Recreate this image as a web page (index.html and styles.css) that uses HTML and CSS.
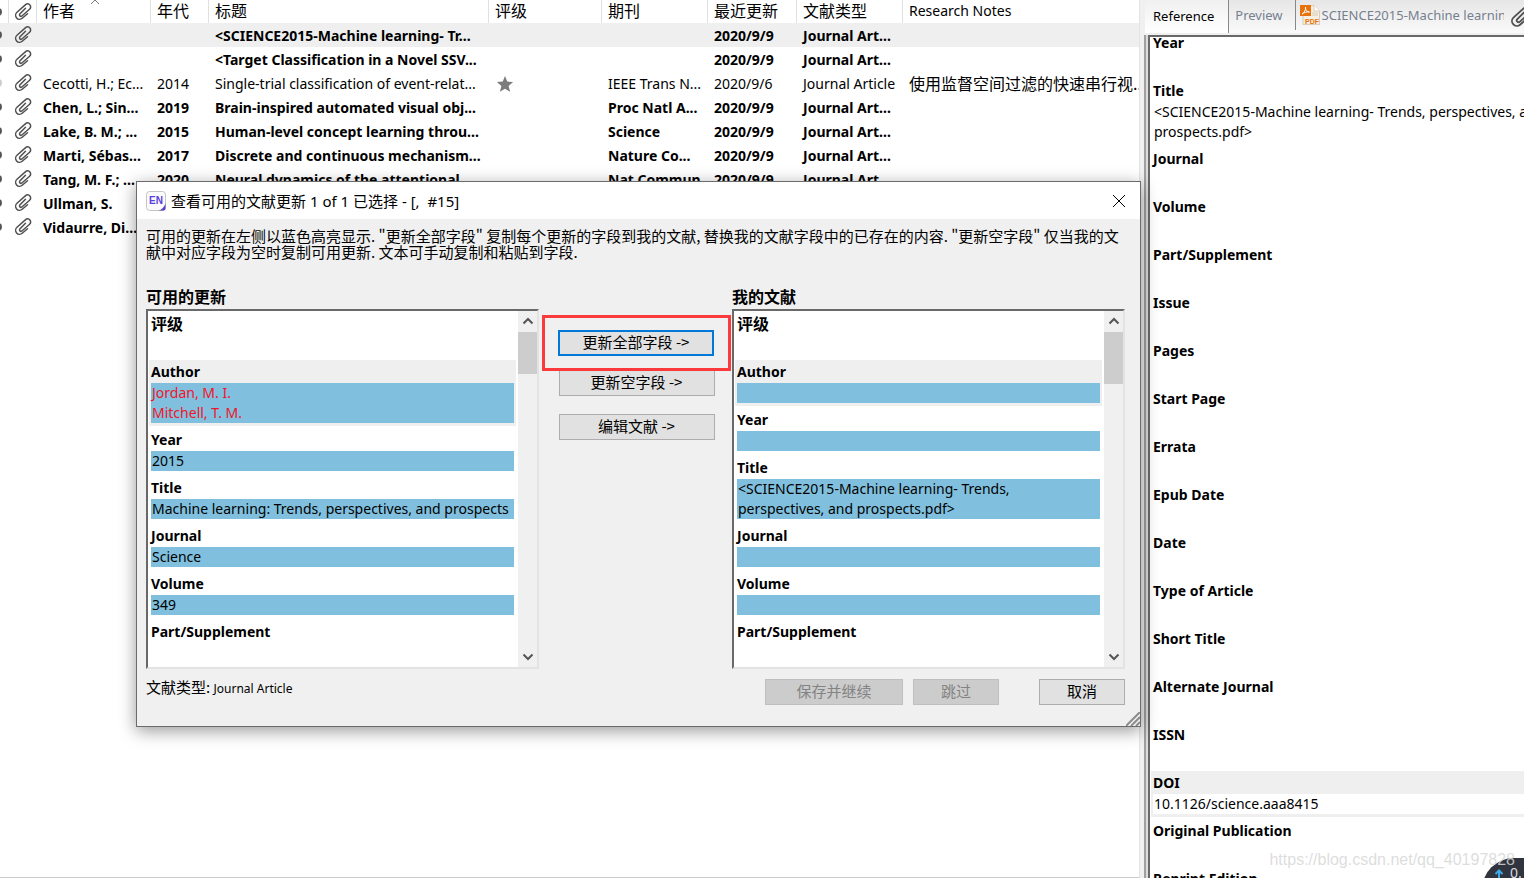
FILE: index.html
```html
<!DOCTYPE html>
<html lang="zh-CN">
<head>
<meta charset="utf-8">
<title>EndNote</title>
<link rel="stylesheet" href="styles.css">
</head>
<body>
<svg class="defs" aria-hidden="true">
  <symbol id="clip" viewBox="0 0 18 18"><path d="M11.500 5.200L5.800 10.900a1.500 1.500 0 0 0 2.100 2.100L15.600 6.200a2.900 2.900 0 0 0-4-4.600L3 9.300a3.900 3.900 0 0 0 5.200 6L13.500 10.800" fill="none" stroke="#505050" stroke-width="1.500" stroke-linecap="round"/></symbol>
  <symbol id="up" viewBox="0 0 12 8"><path d="M1.500 6.500L6 2l4.500 4.500" fill="none" stroke="#555" stroke-width="2"/></symbol>
  <symbol id="down" viewBox="0 0 12 8"><path d="M1.500 1.500L6 6l4.500-4.500" fill="none" stroke="#555" stroke-width="2"/></symbol>
</svg>
<main class="library">
  <table class="refs">
    <colgroup><col class="c-read"><col class="c-clip"><col class="c-author"><col class="c-year"><col class="c-title"><col class="c-rating"><col class="c-journal"><col class="c-updated"><col class="c-type"><col></colgroup>
    <thead>
      <tr><th><i class="dot"></i></th><th><svg class="clip"><use href="#clip"/></svg></th><th class="sorted">作者<svg class="caret" viewBox="0 0 10 4"><path d="M1 4L5 0l4 4" fill="none" stroke="#777"/></svg></th><th>年代</th><th>标题</th><th>评级</th><th>期刊</th><th>最近更新</th><th>文献类型</th><th class="latin">Research Notes</th></tr>
    </thead>
    <tbody>
      <tr class="unread current"><td><i class="dot"></i></td><td><svg class="clip"><use href="#clip"/></svg></td><td></td><td></td><td>&lt;SCIENCE2015-Machine learning- Tr...</td><td></td><td></td><td>2020/9/9</td><td>Journal Art...</td><td></td></tr>
      <tr class="unread"><td><i class="dot"></i></td><td><svg class="clip"><use href="#clip"/></svg></td><td></td><td></td><td>&lt;Target Classification in a Novel SSV...</td><td></td><td></td><td>2020/9/9</td><td>Journal Art...</td><td></td></tr>
      <tr><td><i class="dot read"></i></td><td><svg class="clip"><use href="#clip"/></svg></td><td>Cecotti, H.; Ec...</td><td>2014</td><td>Single-trial classification of event-relat...</td><td><svg class="star" viewBox="0 0 20 20"><path d="M10 1l2.500 6.300 6.500.5-5 4.300 1.700 6.600L10 15.200l-5.700 3.500L6 12.100 1 7.800l6.500-.5z" fill="#7d7d7d"/></svg></td><td>IEEE Trans N...</td><td>2020/9/6</td><td>Journal Article</td><td class="cjk">使用监督空间过滤的快速串行视...</td></tr>
      <tr class="unread"><td><i class="dot"></i></td><td><svg class="clip"><use href="#clip"/></svg></td><td>Chen, L.; Sin...</td><td>2019</td><td>Brain-inspired automated visual obj...</td><td></td><td>Proc Natl A...</td><td>2020/9/9</td><td>Journal Art...</td><td></td></tr>
      <tr class="unread"><td><i class="dot"></i></td><td><svg class="clip"><use href="#clip"/></svg></td><td>Lake, B. M.; ...</td><td>2015</td><td>Human-level concept learning throu...</td><td></td><td>Science</td><td>2020/9/9</td><td>Journal Art...</td><td></td></tr>
      <tr class="unread"><td><i class="dot"></i></td><td><svg class="clip"><use href="#clip"/></svg></td><td>Marti, Sébas...</td><td>2017</td><td>Discrete and continuous mechanism...</td><td></td><td>Nature Co...</td><td>2020/9/9</td><td>Journal Art...</td><td></td></tr>
      <tr class="unread"><td><i class="dot"></i></td><td><svg class="clip"><use href="#clip"/></svg></td><td>Tang, M. F.; ...</td><td>2020</td><td>Neural dynamics of the attentional ...</td><td></td><td>Nat Commun</td><td>2020/9/9</td><td>Journal Art...</td><td></td></tr>
      <tr class="unread"><td><i class="dot"></i></td><td><svg class="clip"><use href="#clip"/></svg></td><td>Ullman, S.</td><td></td><td></td><td></td><td></td><td></td><td></td><td></td></tr>
      <tr class="unread"><td><i class="dot"></i></td><td><svg class="clip"><use href="#clip"/></svg></td><td>Vidaurre, Di...</td><td></td><td></td><td></td><td></td><td></td><td></td><td></td></tr>
    </tbody>
  </table>
</main>
<aside class="detail">
  <nav class="tabs">
    <button class="tab active">Reference</button>
    <button class="tab">Preview</button>
    <button class="tab file"><svg class="pdf" viewBox="0 0 20 20"><path d="M3 .5h11L19.500 6v13.500H3z" fill="#f6efe2" stroke="#d8cdb8"/><path d="M14 .5V6h5.500" fill="#fff" stroke="#d8cdb8"/><path d="M12 8h6M12 10h6" stroke="#d8cdb8"/><rect width="11" height="11" fill="#e8730c"/><path d="M2 9c2-1 4-4 3.500-7C5 5 7 7 9.500 7 7 6.500 4 7.500 2 9z" fill="none" stroke="#fff"/><text x="5" y="19" class="pdf-label">PDF</text></svg><span class="file-name">SCIENCE2015-Machine learning</span></button>
    <button class="attach" aria-label="附件"><svg><use href="#clip"/></svg></button>
  </nav>
  <div class="sheet">
    <div class="field"><b>Year</b><p></p></div>
    <div class="field"><b>Title</b><p>&lt;SCIENCE2015-Machine learning- Trends, perspectives, and<br>prospects.pdf&gt;</p></div>
    <div class="field"><b>Journal</b><p></p></div>
    <div class="field"><b>Volume</b><p></p></div>
    <div class="field"><b>Part/Supplement</b><p></p></div>
    <div class="field"><b>Issue</b><p></p></div>
    <div class="field"><b>Pages</b><p></p></div>
    <div class="field"><b>Start Page</b><p></p></div>
    <div class="field"><b>Errata</b><p></p></div>
    <div class="field"><b>Epub Date</b><p></p></div>
    <div class="field"><b>Date</b><p></p></div>
    <div class="field"><b>Type of Article</b><p></p></div>
    <div class="field"><b>Short Title</b><p></p></div>
    <div class="field"><b>Alternate Journal</b><p></p></div>
    <div class="field"><b>ISSN</b><p></p></div>
    <div class="field focus"><b>DOI</b><p>10.1126/science.aaa8415</p></div>
    <div class="field"><b>Original Publication</b><p></p></div>
    <div class="field"><b>Reprint Edition</b><p></p></div>
  </div>
</aside>

<section class="dialog" role="dialog" aria-labelledby="dlg-title">
  <header class="titlebar">
    <svg class="logo" viewBox="0 0 20 20"><rect x=".5" y=".5" width="19" height="19" rx="3" fill="#fafafa" stroke="#c4c4c4"/><path d="M12.500 19.500c3-.5 5.500-3 7-7v5q0 2-2 2z" fill="#5b3fc4"/><text x="3" y="13" class="logo-label">EN</text></svg>
    <h1 id="dlg-title">查看可用的文献更新 1 of 1 已选择 - [,&nbsp; #15]</h1>
    <button class="close" aria-label="关闭"><svg viewBox="0 0 12 12"><path d="M0 0l12 12M12 0L0 12" stroke="#000"/></svg></button>
  </header>
  <div class="content">
    <p class="intro">可用的更新在左侧以蓝色高亮显示. "更新全部字段" 复制每个更新的字段到我的文献, 替换我的文献字段中的已存在的内容. "更新空字段" 仅当我的文<br>献中对应字段为空时复制可用更新. 文本可手动复制和粘贴到字段.</p>
    <div class="compare">
      <div class="side">
        <h2>可用的更新</h2>
        <div class="list">
          <div class="fields">
            <div class="field"><b class="cjk">评级</b><p></p></div>
            <div class="field focus"><b>Author</b><p class="blue red">Jordan, M. I.<br>Mitchell, T. M.</p></div>
            <div class="field"><b>Year</b><p class="blue">2015</p></div>
            <div class="field"><b>Title</b><p class="blue">Machine learning: Trends, perspectives, and prospects</p></div>
            <div class="field"><b>Journal</b><p class="blue">Science</p></div>
            <div class="field"><b>Volume</b><p class="blue">349</p></div>
            <div class="field"><b>Part/Supplement</b><p></p></div>
          </div>
          <div class="scroll"><svg><use href="#up"/></svg><i class="thumb"></i><svg><use href="#down"/></svg></div>
        </div>
      </div>
      <div class="actions">
        <div class="marked"><button class="btn primary">更新全部字段 -&gt;</button></div>
        <button class="btn">更新空字段 -&gt;</button>
        <button class="btn last">编辑文献 -&gt;</button>
      </div>
      <div class="side">
        <h2>我的文献</h2>
        <div class="list">
          <div class="fields">
            <div class="field"><b class="cjk">评级</b><p></p></div>
            <div class="field focus"><b>Author</b><p class="blue"></p></div>
            <div class="field"><b>Year</b><p class="blue"></p></div>
            <div class="field"><b>Title</b><p class="blue">&lt;SCIENCE2015-Machine learning- Trends,<br>perspectives, and prospects.pdf&gt;</p></div>
            <div class="field"><b>Journal</b><p class="blue"></p></div>
            <div class="field"><b>Volume</b><p class="blue"></p></div>
            <div class="field"><b>Part/Supplement</b><p></p></div>
          </div>
          <div class="scroll"><svg><use href="#up"/></svg><i class="thumb long"></i><svg><use href="#down"/></svg></div>
        </div>
      </div>
    </div>
    <footer class="foot">
      <p>文献类型: <span>Journal Article</span></p>
      <button class="btn save" disabled>保存并继续</button>
      <button class="btn skip" disabled>跳过</button>
      <button class="btn cancel">取消</button>
    </footer>
  </div>
  <svg class="grip" viewBox="0 0 14 14"><path d="M0 14L14 0M5 14l9-9M10 14l4-4" stroke="#8c8c8c" stroke-width="2"/></svg>
</section>

<div class="speed"><svg viewBox="0 0 10 10"><path d="M5 9.500V2M1.500 5L5 1.500 8.500 5" fill="none" stroke="#3fa9e8" stroke-width="2"/></svg>0.</div>
<div class="watermark">https://blog.csdn.net/qq_40197828</div>
</body>
</html>
```
FILE: styles.css
```css
* { box-sizing: border-box; }
body {
  margin: 0;
  height: 100vh;
  display: flex;
  overflow: hidden;
  position: relative;
  background: #fff;
  color: #000;
  font: 14px/20px "Noto Sans", "Noto Sans CJK SC", sans-serif;
}
p, h1, h2 { margin: 0; }
button { font: inherit; color: inherit; padding: 0; border: 0; background: none; }
.defs { position: absolute; width: 0; height: 0; }
.cjk { font-family: "Noto Sans CJK SC", sans-serif; font-size: 16px; }

/* reference list */
.library { flex: 1; min-width: 0; border-right: 1px solid #e3e3e3; border-bottom: 1px solid #ccc; }
.refs { width: 100%; table-layout: fixed; border-collapse: separate; border-spacing: 0; }
.c-read { width: 9px; }
.c-clip { width: 28px; }
.c-author { width: 114px; }
.c-year { width: 58px; }
.c-title { width: 280px; }
.c-rating { width: 113px; }
.c-journal { width: 106px; }
.c-updated { width: 89px; }
.c-type { width: 106px; }
.refs th, .refs td {
  height: 24px;
  padding: 2px 0 0 6px;
  text-align: left;
  white-space: nowrap;
  overflow: hidden;
  line-height: 20px;
}
.refs th { height: 23px; padding: 0 0 3px 6px; border-right: 1px solid #e0e0e0; font: 16px/20px "Noto Sans CJK SC", sans-serif; }
.refs th:last-child { border-right: 0; }
.refs th.latin { font: 14px/20px "Noto Sans", sans-serif; padding-bottom: 2px; }
.refs td.cjk { padding-top: 0; }
.refs tr > :first-child { padding: 0; }
.refs tr > :nth-child(2) { padding: 0 0 0 5px; }
.sorted { position: relative; }
.caret { position: absolute; left: 53px; top: 0; width: 10px; height: 4px; }
.unread { font-weight: 700; }
.current { background: #efefef; }
.dot { display: block; width: 8px; height: 8px; margin-left: -6px; border-radius: 50%; background: #555; }
.dot.read { background: #ccc; }
.clip { display: block; width: 18px; height: 18px; }
.star { display: block; width: 20px; height: 18px; }

/* reference pane */
.detail { width: 384px; background: #f0f0f0; display: flex; flex-direction: column; padding-left: 5px; }
.tabs { display: flex; height: 33px; background: linear-gradient(#e6e6e6, #fafafa); overflow: hidden; font-size: 13px; }
.tab { padding: 0 12px 0 6px; color: #75808f; border-right: 1px solid #888; height: 30px; }
.tab.active { height: 33px; padding: 0 14px 2px 8px; background: linear-gradient(#f0f0f0, #fff); color: #000; }
.tab.file { display: flex; align-items: center; flex: 1; min-width: 0; padding: 0 0 0 4px; border: 0; text-align: left; }
.pdf { width: 20px; height: 20px; flex: none; margin-right: 2px; }
.pdf-label { font: 700 7px "Liberation Sans", sans-serif; fill: #e8730c; }
.file-name { flex: 1; overflow: hidden; white-space: nowrap; }
.attach { width: 20px; padding-left: 6px; overflow: hidden; }
.attach svg { width: 22px; height: 22px; display: block; }
.sheet {
  flex: 1;
  min-height: 0;
  overflow: hidden;
  display: flex;
  flex-direction: column;
  justify-content: flex-start;
  background: #fff;
  border: solid #696969;
  border-width: 2px 0 0 2px;
  margin-left: 3px;
  margin-top: 2px;
  box-shadow: -1px 0 #dcdcdc, -2px 0 #dcdcdc, -4px 0 #a0a0a0;
}
.sheet .field:first-child { margin-top: -6px; }
.sheet .field { flex: none; margin-left: 1px; margin-right: 0; padding-right: 0; }

.field { margin: 0 2px 2px; padding: 0 2px 3px; }
.field b { display: block; height: 23px; line-height: 24px; }
.field b.cjk { line-height: 22px; }
.field p { min-height: 20px; padding: 0 1px; white-space: nowrap; background: #fff; line-height: 20px; }
.focus { background: #efefef; }
.field .blue { background: #80c0de; }
.field .red { color: #f01428; }

/* update dialog */
.dialog {
  position: absolute;
  left: 136px;
  right: 383px;
  top: 181px;
  background: #f0f0f0;
  border: 1px solid #6b6b6b;
  box-shadow: 0 4px 16px rgba(0, 0, 0, .4);
}
.titlebar { height: 37px; background: #fff; display: flex; align-items: center; padding: 0 15px 0 9px; }
.logo { width: 20px; height: 20px; margin-right: 5px; }
.logo-label { font: 700 10px "Liberation Sans", sans-serif; fill: #5b3fe0; }
.titlebar h1 { flex: 1; font: 15px/20px "Noto Sans", "Noto Sans CJK SC", sans-serif; }
.close { width: 12px; height: 12px; }
.close svg { display: block; width: 12px; height: 12px; }
.content { padding: 9px 15px 21px 9px; font-family: "Noto Sans CJK SC", sans-serif; font-size: 15px; }
.intro { line-height: 16px; white-space: nowrap; height: 56px; }
.compare { display: flex; }
.side { flex: 1; min-width: 0; }
.side h2 { font: 700 16px/24px "Noto Sans CJK SC", sans-serif; height: 25px; }
.list {
  display: flex;
  background: #fff;
  border: 2px solid;
  border-color: #696969 #e3e3e3 #e3e3e3 #696969;
  font: 14px/20px "Noto Sans", sans-serif;
}
.fields { flex: 1; min-width: 0; padding: 1px 0 0; height: 356px; overflow: hidden; }
.fields .field { margin-left: 1px; }
.scroll { width: 19px; background: #f0f0f0; display: flex; flex-direction: column; align-items: center; padding: 6px 0; }
.scroll svg { width: 12px; height: 8px; }
.scroll svg:last-child { margin-top: auto; }
.thumb { width: 19px; height: 42px; margin-top: 7px; background: #cdcdcd; }
.thumb.long { height: 52px; }
.actions { width: 193px; padding: 31px 1px 0 3px; display: flex; flex-direction: column; align-items: center; }
.marked { align-self: stretch; padding: 12px 0 12px 13px; border: 3px solid #fb3b3b; z-index: 1; }
.btn { height: 26px; width: 156px; padding-bottom: 2px; border: 1px solid #adadad; background: #e1e1e1; line-height: 20px; }
.btn.primary { display: block; border: 2px solid #0078d7; }
.actions > .btn { margin-top: -1px; }
.actions > .last { margin-top: 18px; }
.foot { display: flex; margin-top: 10px; }
.foot p { flex: 1; line-height: 16px; }
.foot span { font: 12px/16px "Noto Sans", sans-serif; }
.btn:disabled { background: #ccc; border-color: #bfbfbf; color: #838383; }
.save { width: 138px; margin-right: 10px; }
.skip { width: 86px; margin-right: 40px; }
.cancel { width: 86px; }
.grip { position: absolute; right: 0; bottom: 0; width: 14px; height: 14px; }

.watermark { position: absolute; right: 9px; bottom: 8px; font: 16px/20px "Liberation Sans", sans-serif; color: rgba(215, 215, 215, .85); }
.speed {
  position: absolute;
  right: -42px;
  bottom: -44px;
  width: 84px;
  height: 64px;
  padding: 5px 0 0 12px;
  border-radius: 42px;
  background: #30343e;
  color: #ddd;
  display: flex;
  gap: 6px;
  font: 14px/20px "Noto Sans", sans-serif;
}
.speed svg { width: 10px; height: 10px; margin: 6px 0 0; }
```
